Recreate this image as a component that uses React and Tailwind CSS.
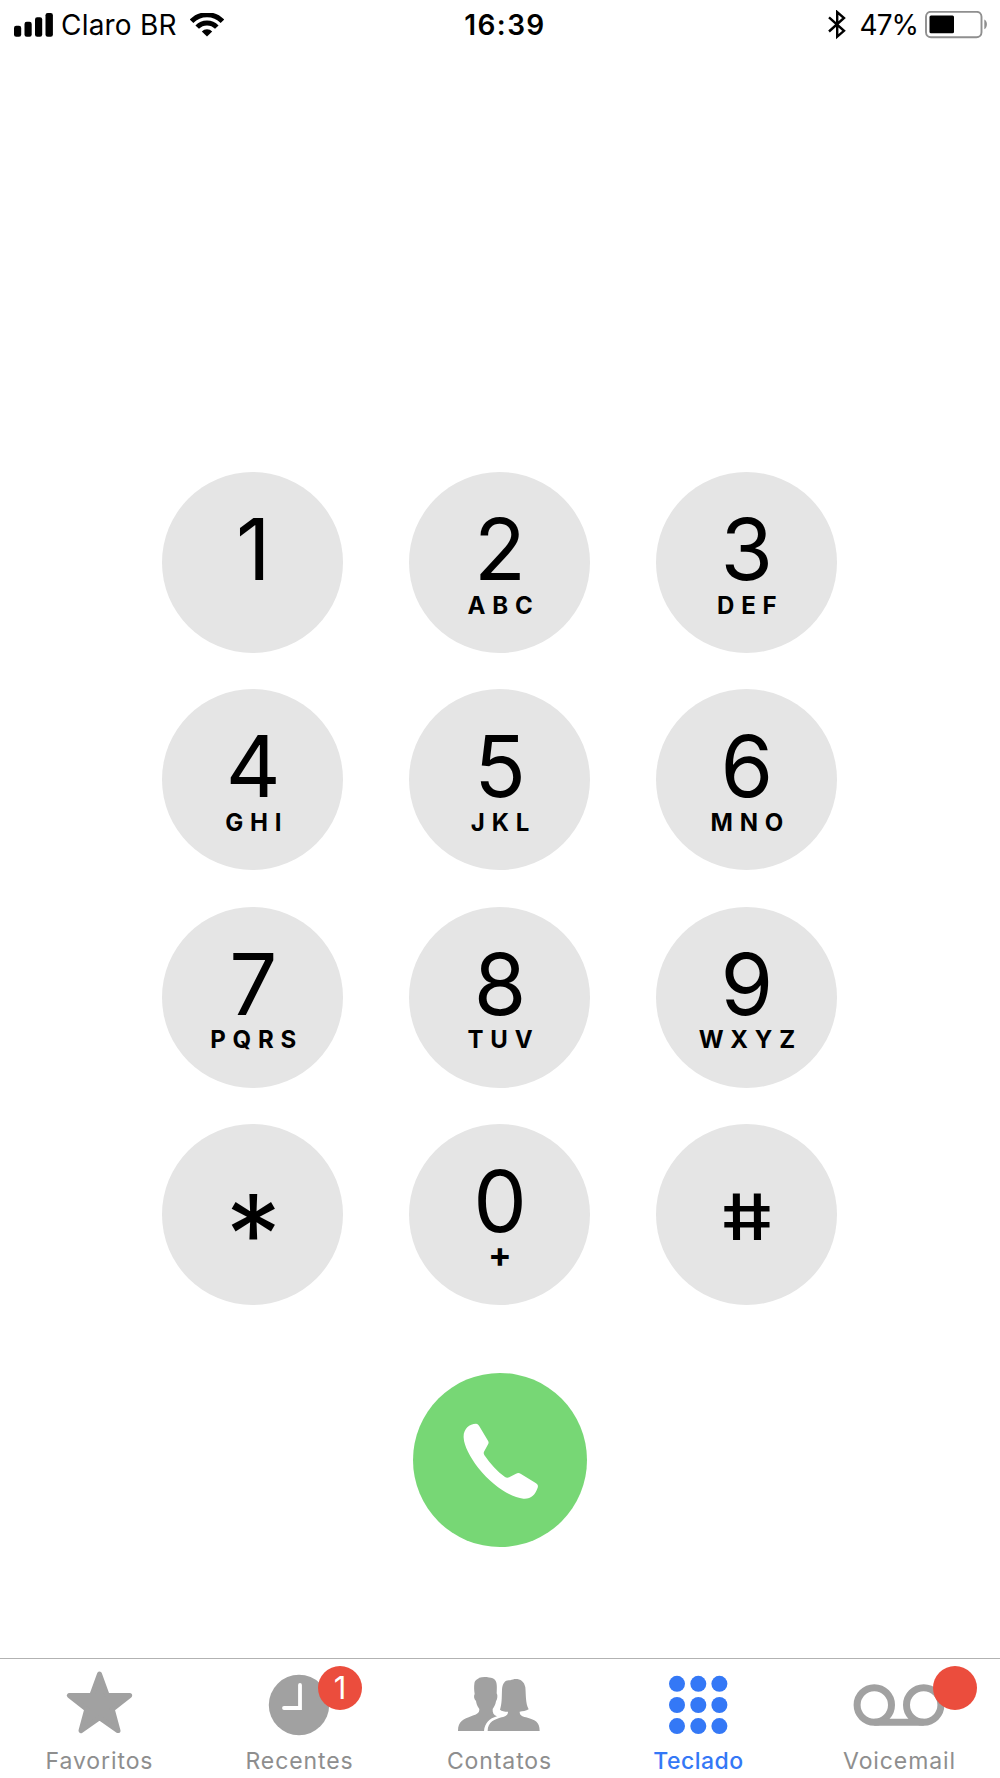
import clsx from 'clsx';

const keys = [
  { digit: '1' },
  { digit: '2', letters: 'ABC' },
  { digit: '3', letters: 'DEF' },
  { digit: '4', letters: 'GHI' },
  { digit: '5', letters: 'JKL' },
  { digit: '6', letters: 'MNO' },
  { digit: '7', letters: 'PQRS' },
  { digit: '8', letters: 'TUV' },
  { digit: '9', letters: 'WXYZ' },
  { digit: '*' },
  { digit: '0', letters: '+' },
  { digit: '#' },
];

const StatusBar = () => (
  <header className="grid h-[50px] grid-cols-3 items-center pl-[14px] pr-3">
    <div className="flex items-center">
      <svg className="h-[25px] w-[39px]" viewBox="0 0 39 25">
        <rect x="0" y="12.8" width="7.2" height="11" rx="2.2" />
        <rect x="10.5" y="8.8" width="7.2" height="15" rx="2.2" />
        <rect x="21" y="4.3" width="7.2" height="19.5" rx="2.2" />
        <rect x="31.5" y="0" width="7.4" height="23.8" rx="2.2" />
      </svg>
      <span className="ml-2 text-[28px] leading-none tracking-[0.2px]">Claro BR</span>
      <svg className="ml-[13.5px] h-6 w-[34px]" viewBox="0 0 34 24">
        <g fill="none" stroke="#000" strokeWidth="4.9">
          <path d="M1.6 8.2A21.5 21.5 0 0 1 32.4 8.2" />
          <path d="M7.2 14.1A13.6 13.6 0 0 1 26.8 14.1" />
        </g>
        <path d="M11.8 18.5a7.3 7.3 0 0 1 10.4 0L17 23.5z" />
      </svg>
    </div>
    <span className="ml-2 text-center text-[28px] font-semibold leading-none tracking-[1.4px]">16:39</span>
    <div className="flex items-center justify-end">
      <svg className="h-[30px] w-[18px]" viewBox="0 0 18 30" fill="none" stroke="#000" strokeWidth="2.4">
        <path d="M1 7.3L16 20.8L9.2 26.7V2.1L16 8L1 21.5" />
      </svg>
      <span className="ml-[14px] text-[28px] leading-none tracking-[-1px]">47%</span>
      <svg className="ml-[7px] h-[29px] w-[63px]" viewBox="0 0 63 29">
        <rect x="1" y="0.8" width="55.5" height="25.5" rx="5" fill="none" stroke="#8f8f8f" strokeWidth="1.9" />
        <rect x="4.5" y="4.6" width="24.5" height="17.6" rx="1.5" />
        <path d="M59.3 8.6C62.8 10.1 62.8 16.8 59.3 18.3Z" fill="#8f8f8f" />
      </svg>
    </div>
  </header>
);

const Key = ({ digit, letters }) => {
  const symbol = digit === '*' || digit === '#';

  return (
    <button className="flex size-[181px] flex-col items-center rounded-full bg-[#e5e5e5] pt-[36px]">
      <span
        className={clsx(
          'leading-[84px]',
          !symbol && 'ml-px text-[85px]',
          digit === '*' && 'ml-px pt-[33px] text-[111px]',
          digit === '#' && 'mr-px skew-x-[9.5deg] scale-x-[1.28] pt-[15px] text-[64px] font-medium'
        )}
      >
        {digit}
      </span>
      {letters && (
        <span
          className={clsx(
            'leading-6',
            letters === '+'
              ? '-mt-[2px] ml-px text-[35px] font-bold'
              : 'mt-[1.5px] -mr-[8px] text-2xl font-bold tracking-[6.8px]'
          )}
        >
          {letters}
        </span>
      )}
    </button>
  );
};

const StarIcon = () => (
  <svg className="h-[70px] w-[120px]" viewBox="0 0 120 70" fill="currentColor" stroke="currentColor" strokeWidth="5" strokeLinejoin="round">
    <path d="M59.5 8L67.3 29.6H89.7L72.2 43.2L78 64.6L59.5 51.8L41 64.6L46.8 43.2L29.3 29.6H51.7Z" />
  </svg>
);

const ClockIcon = () => (
  <svg className="h-[70px] w-[120px]" viewBox="0 0 120 70">
    <circle cx="59" cy="39" r="30.2" fill="currentColor" />
    <path d="M60 19V42H44" fill="none" stroke="#fff" strokeWidth="3.8" strokeLinecap="round" />
  </svg>
);

const PeopleIcon = () => (
  <svg className="h-[70px] w-[120px]" viewBox="120 78 360 210" fill="currentColor">
    <path d="M174 273C174 243 190 238 215 228C232 222 238 220 238 207C231 198 229 190 228 183C221 176 221 167 224 162C222 150 222 140 223 132C224 118 234 118 238 113C250 109 268 111 278 115C290 121 292 130 290 160C294 166 292 178 288 184C286 195 283 200 278 207C277 218 281 226 291 229C268 235 254 250 252 273Z" />
    <path d="M263 273C263 245 285 238 305 232C318 228 324 225 324 215C313 215 305 213 300 209C306 190 305 175 306 150C307 127 318 118 331 121C347 112 372 116 376 142C378 160 376 190 386 208C378 213 368 214 359 215C359 225 364 228 378 232C405 240 419 245 419 273Z" />
  </svg>
);

const KeypadIcon = () => (
  <svg className="h-[70px] w-[120px]" viewBox="0 0 120 70" fill="currentColor">
    {[17.8, 39, 60.1].map((y) =>
      [37, 58.3, 79.4].map((x) => <circle key={`${x}-${y}`} cx={x} cy={y} r="8" />)
    )}
  </svg>
);

const VoicemailIcon = () => (
  <svg className="h-[70px] w-[120px]" viewBox="0 0 120 70" fill="none" stroke="currentColor" strokeWidth="7">
    <circle cx="34.3" cy="39" r="17.2" />
    <circle cx="83.7" cy="39" r="17.2" />
    <path d="M34.3 56.2H83.7" />
  </svg>
);

const tabs = [
  { label: 'Favoritos', Icon: StarIcon },
  { label: 'Recentes', Icon: ClockIcon, badge: '1' },
  { label: 'Contatos', Icon: PeopleIcon },
  { label: 'Teclado', Icon: KeypadIcon, active: true },
  { label: 'Voicemail', Icon: VoicemailIcon, badge: ' ' },
];

const TabBar = () => (
  <nav className="grid h-[120px] grid-cols-5 border-t border-[#b2b2b2]">
    {tabs.map(({ label, Icon, badge, active }) => (
      <a
        key={label}
        className={clsx(
          'flex flex-col items-center pt-[7px]',
          active ? 'text-[#3478f6]' : 'text-[#a1a1a1]'
        )}
      >
        <div className="relative">
          <Icon />
          {badge && (
            <span
              className={clsx(
                'absolute top-0 flex size-11 items-center justify-center rounded-full bg-[#eb4d3d] text-[31px] text-white',
                label === 'Voicemail' ? 'left-[93px]' : 'left-[78px]'
              )}
            >
              {badge}
            </span>
          )}
        </div>
        <span
          className={clsx(
            'mt-[13px] text-[23px] leading-6',
            active ? '-ml-[3px] font-medium tracking-[0.5px]' : '-ml-px tracking-[0.9px] text-[#8e8e8e]'
          )}
        >
          {label}
        </span>
      </a>
    ))}
  </nav>
);

const App = () => {
  return (
    <div className="flex h-[1778px] w-[1000px] flex-col overflow-hidden bg-white font-['Inter',sans-serif] text-black">
      <StatusBar />

      <main className="flex flex-1 flex-col items-center pt-[422px]">
        <div className="mr-px grid grid-cols-3 gap-x-[65.8px] gap-y-[36.3px]">
          {keys.map((key) => (
            <Key key={key.digit} {...key} />
          ))}
        </div>

        <button className="mt-[68px] mr-px flex size-[174px] items-center justify-center rounded-full bg-[#77d775]">
          <svg className="mt-[3px] ml-[3px] h-[76px] w-[76px]" viewBox="190 190 228 228" fill="#fff">
            <path d="M192 234C190 210 208 192 229 192C234 192 236 195 239 200L265 243C268 248 267 251 264 256L253 276C251 281 253 285 256 289C272 312 292 335 316 352C320 355 325 355 330 352L349 342C355 339 359 340 364 343L408 370C414 374 416 377 414 384C407 405 393 419 371 417C335 414 280 380 236 325C211 292 193 258 192 234Z" />
          </svg>
        </button>
      </main>

      <TabBar />
    </div>
  );
};

export default App;
